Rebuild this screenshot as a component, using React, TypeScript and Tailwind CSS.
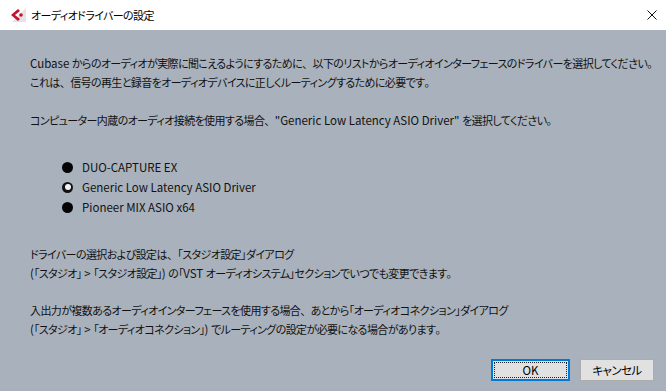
import React from "react";

function T({ text }: { text: string }) {
  const parts = text.match(/([\x20-\x7e]+|[、。]|[^\x20-\x7e、。]+)/g) || [];
  return (
    <>
      {parts.map((p, i) => {
        if (/^[\x20-\x7e]+$/.test(p)) {
          return (
            <span key={i} className="tracking-normal text-[11.5px]">
              {p}
            </span>
          );
        }
        if (p === "、" || p === "。") {
          return (
            <span key={i} className="[font-feature-settings:normal]">
              {p}
            </span>
          );
        }
        return <span key={i}>{p}</span>;
      })}
    </>
  );
}

function CubaseIcon() {
  return (
    <svg width="16" height="14" viewBox="0 0 16 14">
      <polygon points="2,14 16,0 16,14" fill="#e4e4e4" />
      <polygon points="1,7 8,1 10,3 5,7 10,11 8,13" fill="#c8102e" />
      <circle cx="11" cy="7" r="1.8" fill="#c8102e" />
    </svg>
  );
}

function Radio({ selected }: { selected?: boolean }) {
  return selected ? (
    <span className="w-[11px] h-[11px] rounded-full bg-[#111] flex items-center justify-center shrink-0">
      <span className="w-[6px] h-[6px] rounded-full bg-[#f2f2f2]" />
    </span>
  ) : (
    <span className="w-[11px] h-[11px] rounded-full bg-[#050505] shrink-0" />
  );
}

export default function App() {
  const drivers = [
    { name: "DUO-CAPTURE EX", sel: false },
    { name: "Generic Low Latency ASIO Driver", sel: true },
    { name: "Pioneer MIX ASIO x64", sel: false },
  ];
  return (
    <div className="w-[666px] h-[391px] flex flex-col bg-[#a9b2bc] text-[11px] tracking-[-0.6px] text-[#111] font-['Noto_Sans_CJK_JP',sans-serif] [font-feature-settings:'palt'] overflow-hidden">
      <div className="h-[30px] bg-white flex items-center shrink-0">
        <div className="ml-[10px] mt-[-1px]">
          <CubaseIcon />
        </div>
        <span className="ml-[5px] text-[11px] text-black">オーディオドライバーの設定</span>
        <div className="ml-auto mr-[9px] w-[10px] h-[10px]">
          <svg width="10" height="10" viewBox="0 0 10 10">
            <path d="M0.5 0.5 L9.5 9.5 M9.5 0.5 L0.5 9.5" stroke="#111" strokeWidth="1" />
          </svg>
        </div>
      </div>
      <div className="flex-1 flex flex-col pl-[30px] pt-[24px] leading-[19px] whitespace-nowrap">
        <p><T text="Cubase からのオーディオが実際に聞こえるようにするために、以下のリストからオーディオインターフェースのドライバーを選択してください。" /></p>
        <p><T text="これは、信号の再生と録音をオーディオデバイスに正しくルーティングするために必要です。" /></p>
        <p className="mt-[19px]"><T text={'コンピューター内蔵のオーディオ接続を使用する場合、"Generic Low Latency ASIO Driver" を選択してください。'} /></p>
        <div className="mt-[27px] ml-[32px] flex flex-col tracking-normal text-[11.5px]">
          {drivers.map((d) => (
            <div key={d.name} className="h-[20px] flex items-center gap-[9px]">
              <Radio selected={d.sel} />
              <span>{d.name}</span>
            </div>
          ))}
        </div>
        <p className="mt-[28px]"><T text="ドライバーの選択および設定は、「スタジオ設定」ダイアログ" /></p>
        <p><T text="(「スタジオ」 > 「スタジオ設定」) の「VST オーディオシステム」セクションでいつでも変更できます。" /></p>
        <p className="mt-[18px]"><T text="入出力が複数あるオーディオインターフェースを使用する場合、あとから「オーディオコネクション」ダイアログ" /></p>
        <p><T text="(「スタジオ」 > 「オーディオコネクション」) でルーティングの設定が必要になる場合があります。" /></p>
        <div className="mt-[20px] mr-[12px] flex justify-end gap-[10px]">
          <button className="w-[79px] h-[22px] border-2 border-[#0078d7] bg-[#e1e1e1] p-[1px] flex">
            <span className="flex-1 border border-dotted border-[#222] flex items-center justify-center text-[11.5px] tracking-normal text-black">OK</span>
          </button>
          <button className="w-[74px] h-[22px] border border-[#adadad] bg-[#e1e1e1] flex items-center justify-center text-[11.5px] text-black">キャンセル</button>
        </div>
      </div>
    </div>
  );
}
